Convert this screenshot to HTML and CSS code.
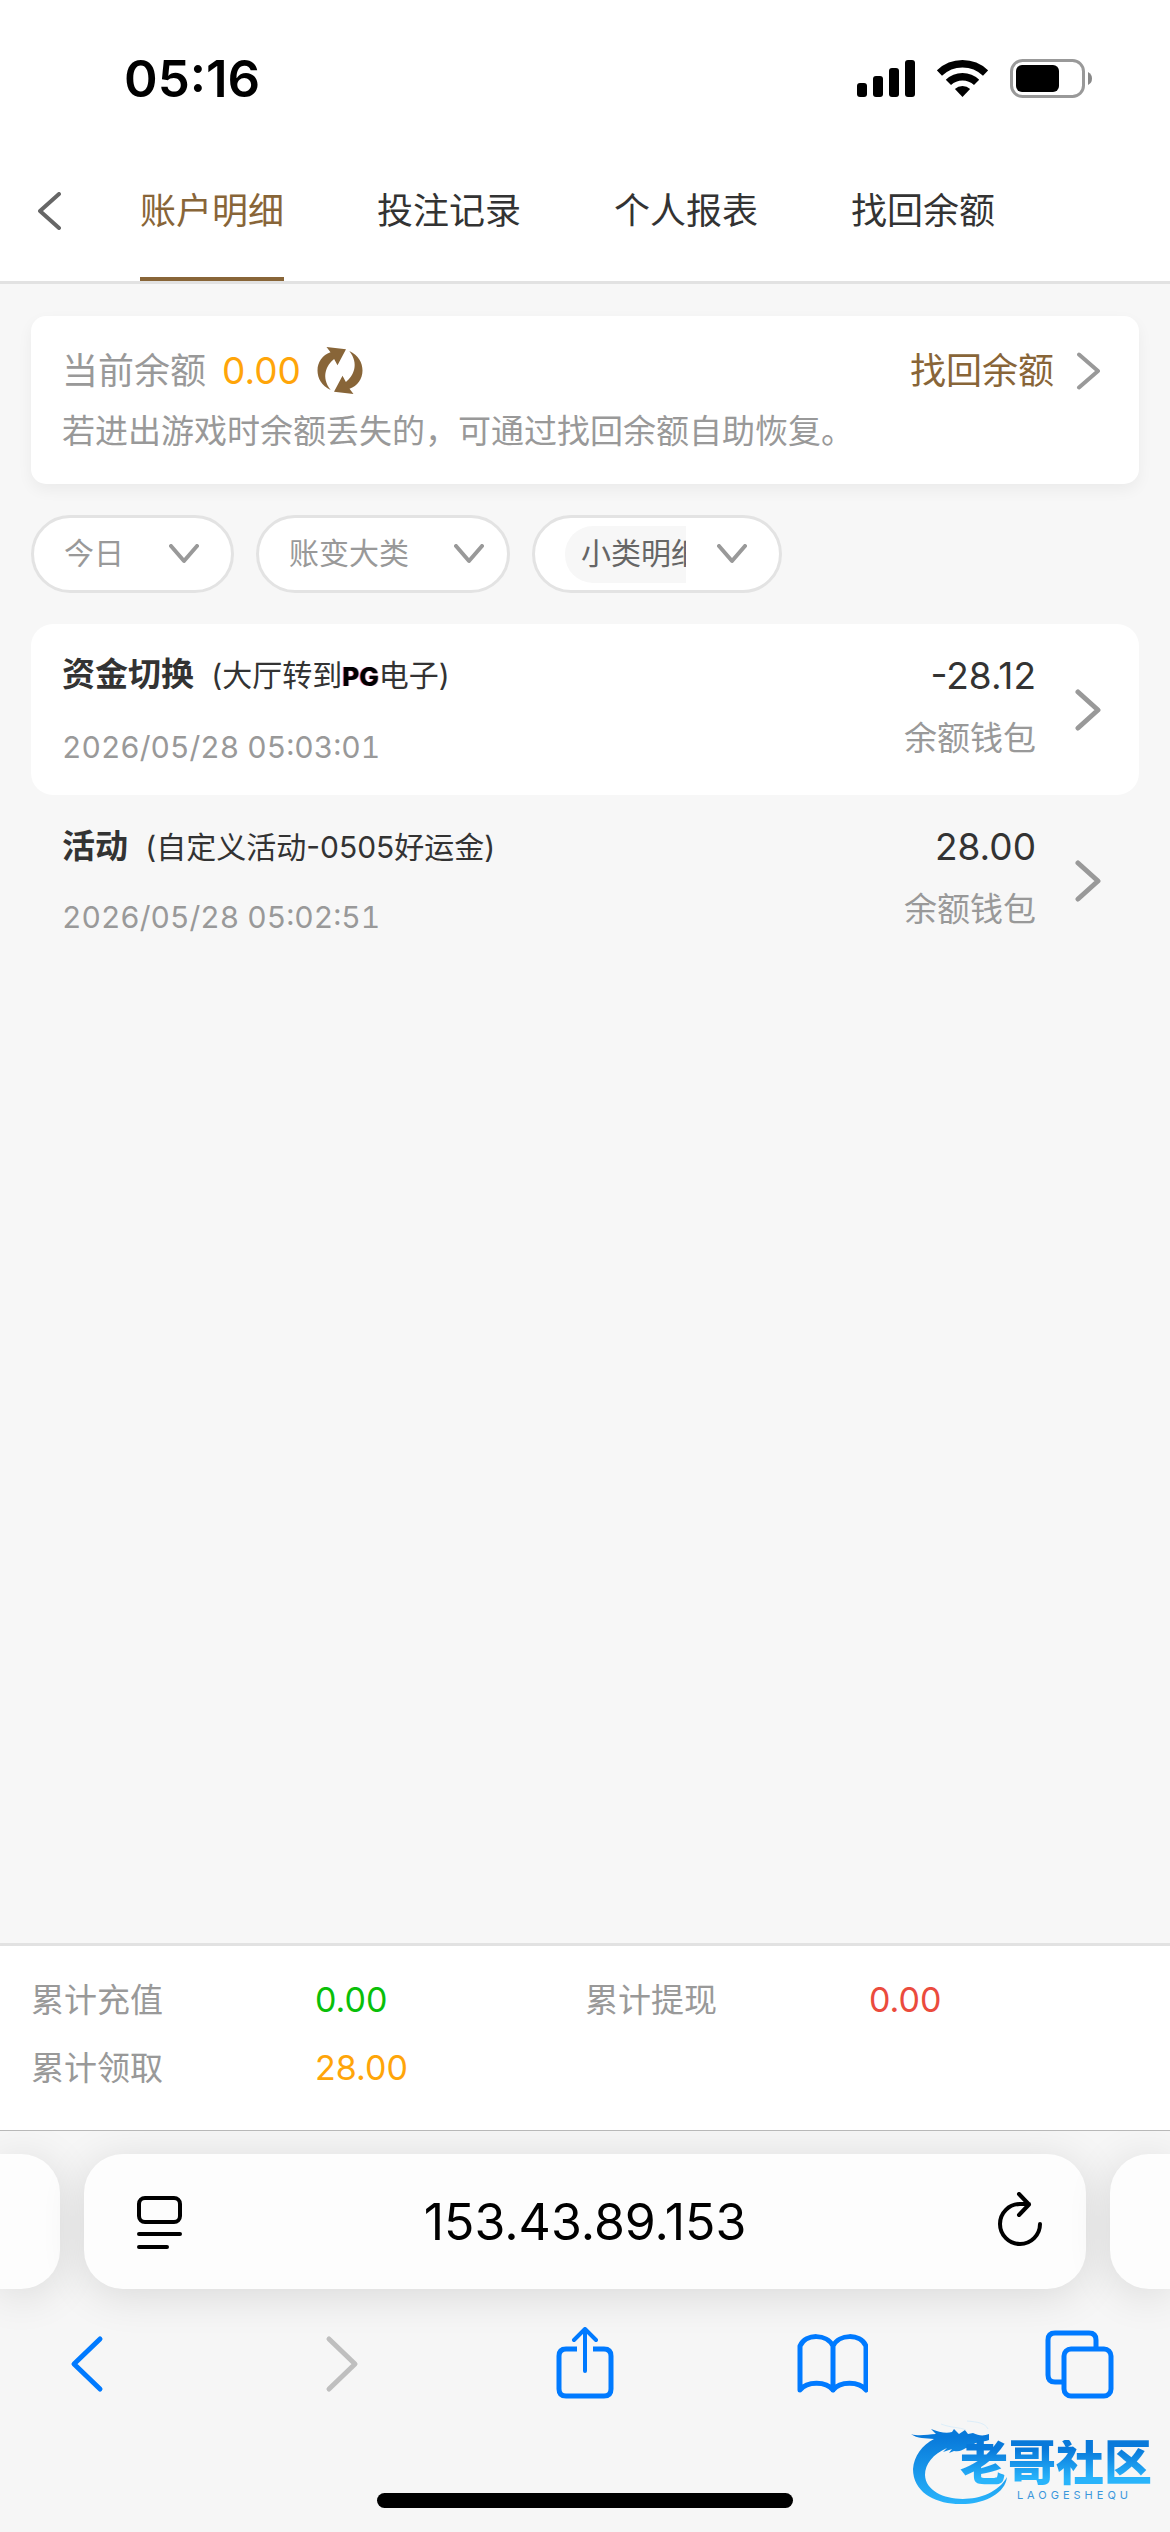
FILE: index.html
```html
<!DOCTYPE html>
<html lang="zh-CN">
<head>
<meta charset="utf-8">
<meta name="viewport" content="width=device-width">
<title>账户明细</title>
<link rel="stylesheet" href="styles.css">
</head>
<body>
<header class="top">
  <div class="status">
    <time class="clock">05:16</time>
    <div class="indicators">
      <svg width="58" height="37" viewBox="0 0 58 37"><rect y="23" width="10" height="14" rx="3"/><rect x="16" y="16" width="10" height="21" rx="3"/><rect x="32" y="8" width="10" height="29" rx="3"/><rect x="48" width="10" height="37" rx="3"/></svg>
      <svg width="51" height="37" viewBox="0 0 51 37"><path d="M2.4 13.1A33.25 33.25 0 0 1 48.6 13.1M11.4 22.4A20.25 20.25 0 0 1 39.6 22.4" fill="none" stroke="#000" stroke-width="7.5"/><path d="M25.5 37L17.9 29.1A11 11 0 0 1 33.1 29.1Z"/></svg>
      <svg width="82" height="39" viewBox="0 0 82 39"><rect x="1.5" y="1.5" width="72" height="36" rx="11" fill="none" stroke="#999" stroke-width="3"/><rect x="6" y="6" width="43" height="27" rx="6"/><path d="M78 13Q82 15 82 19.5Q82 24 78 26Z" fill="#888"/></svg>
    </div>
  </div>
  <nav class="tabs">
    <button class="icon-button" aria-label="返回"><svg width="24" height="38" viewBox="0 0 24 38"><path d="M21 2L2 19L21 36" fill="none" stroke="#666" stroke-width="4" stroke-linecap="round" stroke-linejoin="round"/></svg></button>
    <a class="tab active" href="#details">账户明细</a>
    <a class="tab" href="#bets">投注记录</a>
    <a class="tab" href="#report">个人报表</a>
    <a class="tab" href="#recover">找回余额</a>
  </nav>
</header>

<main class="content">
  <section class="balance">
    <div class="balance-row">
      <span class="muted">当前余额</span>
      <span class="amount orange">0.00</span>
      <button class="icon-button" aria-label="刷新"><svg width="46" height="47" viewBox="0 0 45 47" fill="#886538"><path id="arrow" d="M9 0L28.5 2.3L20 18.3L16.6 12C9 18 3 30 13.2 43C4 39 0 31 0 23.5C0 15 5 8 13 5.3Z"/><use href="#arrow" transform="rotate(180 22.5 23.5)"/></svg></button>
      <a class="recover" href="#recover">找回余额
        <svg width="25" height="38" viewBox="0 0 25 38"><path d="M3 2.500L22 19L3 35.500" class="chevron"/></svg>
      </a>
    </div>
    <p class="hint">若进出游戏时余额丢失的，可通过找回余额自助恢复。</p>
  </section>

  <form class="filters">
    <label class="filter">
      <select class="select day" aria-label="日期"><option>今日</option></select>
      <svg width="30" height="20" viewBox="0 0 30 20"><path d="M2 2L15 17L28 2" class="chevron"/></svg>
    </label>
    <label class="filter narrow">
      <select class="select type" aria-label="账变大类"><option>账变大类</option></select>
      <svg width="30" height="20" viewBox="0 0 30 20"><path d="M2 2L15 17L28 2" class="chevron"/></svg>
    </label>
    <label class="filter">
      <span class="clip"><select class="select tag" aria-label="小类明细"><option>小类明细</option></select></span>
      <svg width="30" height="20" viewBox="0 0 30 20"><path d="M2 2L15 17L28 2" class="chevron"/></svg>
    </label>
  </form>

  <ul class="records">
    <li><a class="record" href="#record-1">
      <div class="record-main">
        <p class="record-title"><strong>资金切换</strong> <span class="note">(大厅转到<b class="pg">PG</b>电子)</span></p>
        <time class="date">2026/05/28 05:03:01</time>
      </div>
      <div class="record-side">
        <span class="amount">-28.12</span>
        <span class="wallet">余额钱包</span>
      </div>
      <svg width="26" height="42" viewBox="0 0 26 42"><path d="M3 3L23 21L3 39" class="chevron bold"/></svg>
    </a></li>
    <li><a class="record" href="#record-2">
      <div class="record-main">
        <p class="record-title"><strong>活动</strong> <span class="note">(自定义活动-0505好运金)</span></p>
        <time class="date">2026/05/28 05:02:51</time>
      </div>
      <div class="record-side">
        <span class="amount">28.00</span>
        <span class="wallet">余额钱包</span>
      </div>
      <svg width="26" height="42" viewBox="0 0 26 42"><path d="M3 3L23 21L3 39" class="chevron bold"/></svg>
    </a></li>
  </ul>
</main>

<dl class="totals">
  <div class="total"><dt>累计充值</dt><dd class="green">0.00</dd></div>
  <div class="total"><dt>累计提现</dt><dd class="red">0.00</dd></div>
  <div class="total"><dt>累计领取</dt><dd class="orange">28.00</dd></div>
</dl>

<footer class="browser">
  <div class="address-row">
    <div class="pill edge-left"></div>
    <div class="pill address">
      <button class="icon-button" aria-label="页面菜单"><svg width="54" height="60" viewBox="0 0 54 60" fill="none" stroke="#000" stroke-width="4" stroke-linecap="round"><rect x="11" y="6" width="41" height="24" rx="6"/><path d="M11 42H52M11 55H39"/></svg></button>
      <input class="url" type="text" aria-label="地址" value="153.43.89.153">
      <button class="icon-button" aria-label="重新载入"><svg width="54" height="60" viewBox="0 0 54 60" fill="none" stroke="#000" stroke-width="4" stroke-linecap="round" stroke-linejoin="round"><path d="M52 32A20 20 0 1 1 32 12H41M31 2L41 12.500L31 23"/></svg></button>
    </div>
    <div class="pill edge-right"></div>
  </div>
  <nav class="toolbar">
    <button class="icon-button" aria-label="后退"><svg width="72" height="72" viewBox="0 0 72 72"><path d="M50 12L24 37L50 62"/></svg></button>
    <button class="icon-button" aria-label="前进"><svg width="72" height="72" viewBox="0 0 72 72"><path d="M30 12L56 37L30 62" stroke="#bfbfbf"/></svg></button>
    <button class="icon-button" aria-label="共享"><svg width="72" height="72" viewBox="0 0 72 72"><path d="M30 22H19Q12 22 12 29V62Q12 69 19 69H57Q64 69 64 62V29Q64 22 57 22H46" stroke-linecap="butt"/><path d="M38 44V3M27 13L38 2L49 13" stroke-width="4"/></svg></button>
    <button class="icon-button" aria-label="书签"><svg width="72" height="72" viewBox="0 0 72 72"><path d="M37 19V63M37 19C31 7 10 6 4 19V63C11 54 30 54 37 63C44 54 63 54 70 63V19C64 6 43 7 37 19"/></svg></button>
    <button class="icon-button" aria-label="标签页"><svg width="72" height="72" viewBox="0 0 72 72"><rect x="20" y="22" width="47" height="47" rx="7"/><path d="M52 21V13Q52 6 45 6H11Q4 6 4 13V48Q4 55 11 55H19" stroke-linecap="butt"/></svg></button>
  </nav>
  <div class="home"></div>
  <div class="watermark">
    <svg class="dragon" width="104" height="84" viewBox="0 0 104 84">
      <defs><linearGradient id="blue" x1="0" y1="0" x2="0" y2="1"><stop offset="0.1" stop-color="#0879da"/><stop offset="1" stop-color="#29b4fb"/></linearGradient></defs>
      <path fill="url(#blue)" d="M0 14C9 17 17 14 25 14L20 9C28 12 35 14 41 12L43 9L48 14L54 10L57 14L62 13C68 16 73 16 78 14L78 20C72 22 66 22 63 24C68 26 72 26 76 24L75 29C68 32 60 29 55 28C51 30 49 32 43 31L38 33L41 29L32 32L36 28C22 34 14 44 14 55C15 84 78 89 96 57C92 93 2 96 2 49C3 36 11 25 23 19C15 18 6 19 0 14Z"/>
      <path fill="none" stroke="#dceefa" d="M30 4C40 8 48 7 55 10M56 1C67 2 74 3 77 9"/>
    </svg>
    <div class="wordmark"><span class="brand">老哥社区</span><span class="latin">LAOGESHEQU</span></div>
  </div>
</footer>
</body>
</html>
```
FILE: styles.css
```css
* { box-sizing: border-box; }
body {
  margin: 0;
  min-height: 100vh;
  display: flex;
  flex-direction: column;
  background: #f7f7f7;
  color: #333;
  font-family: Inter, "Noto Sans CJK SC", sans-serif;
  font-size: 33px;
}
p, ul, dl, dd { margin: 0; padding: 0; }
ul { list-style: none; }
a { color: inherit; text-decoration: none; }
svg { display: block; flex: none; }
.icon-button { flex: none; padding: 0; border: 0; background: none; }
.chevron { fill: none; stroke: #999; stroke-width: 4; stroke-linecap: round; stroke-linejoin: round; }
.chevron.bold { stroke-width: 5; }
.muted { color: #999; }
.orange { color: #ffa509; }
.green { color: #09bf09; }
.red { color: #eb4b3d; }

.top { background: #fff; border-bottom: 3px solid #e2e2e2; }
.status {
  height: 141px;
  padding: 15px 78px 0 124px;
  display: flex;
  align-items: center;
  justify-content: space-between;
}
.clock { color: #000; font-size: 51px; font-weight: 600; }
.indicators { display: flex; align-items: center; gap: 22px; }
.tabs { display: flex; align-items: center; gap: 93px; height: 140px; padding-left: 38px; }
.tabs .icon-button { margin-right: -15px; }
.tab { height: 140px; font-size: 36px; line-height: 140px; }
.tab.active { color: #886538; box-shadow: inset 0 -4px #886538; }

.content { flex: 1; padding: 32px 31px; }
.balance {
  padding: 24px 38px 23px 31px;
  background: #fff;
  border-radius: 15px;
  box-shadow: 0 6px 15px rgba(0, 0, 0, 0.05);
}
.balance-row { display: flex; align-items: center; gap: 16px; height: 61px; font-size: 36px; line-height: 60px; }
.recover { display: flex; align-items: center; gap: 22px; margin-left: auto; color: #886538; }
.hint { color: #999; line-height: 60px; }

.filters { display: flex; gap: 22px; margin-top: 31px; }
.filter {
  display: flex;
  align-items: center;
  height: 78px;
  padding: 0 32px 0 30px;
  border: 3px solid #e3e3e3;
  border-radius: 39px;
  background: #fff;
}
.filter.narrow { padding-right: 23px; }
.select {
  appearance: none;
  height: 57px;
  padding: 0 0 2px;
  border: 0;
  background: none;
  color: #999;
  font-family: inherit;
  font-size: 30px;
}
.day { width: 105px; }
.type { width: 165px; }
.clip { width: 121px; height: 57px; margin-right: 31px; overflow: hidden; }
.tag { width: 152px; padding-left: 16px; border-radius: 28px; background: #f7f7f7; color: #666; }

.records { margin-top: 31px; }
.record { display: flex; align-items: center; height: 171px; padding: 0 38px 0 31px; border-radius: 22px; }
.records li:first-child .record { background: #fff; }
.record-main { flex: 1; padding-top: 2px; }
.record-title { line-height: 70px; }
.note { font-size: 30px; margin-left: 8px; }
.pg {
  color: #000;
  font-size: 26px;
  font-weight: 800;
  text-shadow: -1px 0 rgba(150, 40, 255, 0.5), 1px 0 rgba(255, 90, 20, 0.5);
}
.date { display: block; color: #999; font-size: 30px; line-height: 70px; font-variant-numeric: tabular-nums; }
.record-side { display: flex; flex-direction: column; align-items: flex-end; margin-right: 39px; padding-bottom: 6px; line-height: 62px; }
.amount { font-size: 37px; }
.wallet { color: #999; }

.totals {
  display: grid;
  grid-template-columns: 1fr 1fr;
  padding: 20px 31px 28px;
  background: #fff;
  border-top: 3px solid #e2e2e2;
}
.total { display: grid; grid-template-columns: 284px 1fr; line-height: 68px; }
.total dt { color: #999; }
.total dd { font-size: 34px; }

.browser {
  position: relative;
  padding: 23px 0 24px;
  border-top: 1px solid #b8b8b8;
  background: #f6f6f6;
  overflow: hidden;
}
.address-row { display: flex; gap: 24px; }
.pill { height: 135px; border-radius: 39px; background: #fdfdfd; box-shadow: 0 6px 44px rgba(0, 0, 0, 0.12); }
.edge-left { width: 60px; border-radius: 0 39px 39px 0; }
.edge-right { width: 60px; border-radius: 39px 0 0 39px; }
.address { flex: 1; display: flex; align-items: center; padding: 0 44px; }
.url {
  flex: 1;
  min-width: 0;
  padding: 0;
  border: 0;
  background: none;
  color: #000;
  font-family: inherit;
  font-size: 50px;
  text-align: center;
}
.toolbar {
  display: flex;
  justify-content: space-between;
  padding: 38px 54px 94px 50px;
}
.toolbar svg { fill: none; stroke: #007aff; stroke-width: 5; stroke-linecap: round; stroke-linejoin: round; }
.home { width: 416px; height: 15px; margin: 0 auto; border-radius: 8px; background: #000; }
.watermark { position: absolute; right: 18px; bottom: 28px; display: flex; }
.dragon { margin-right: -55px; }
.wordmark { display: flex; flex-direction: column; align-items: flex-end; padding-top: 20px; }
.brand {
  font-size: 48px;
  font-weight: 900;
  line-height: 46px;
  color: transparent;
  background: linear-gradient(#0879da 20%, #29b4fb 85%);
  background-clip: text;
}
.latin { margin-right: 20px; color: #3a97dc; font-size: 11px; line-height: 18px; letter-spacing: 4px; }
```
